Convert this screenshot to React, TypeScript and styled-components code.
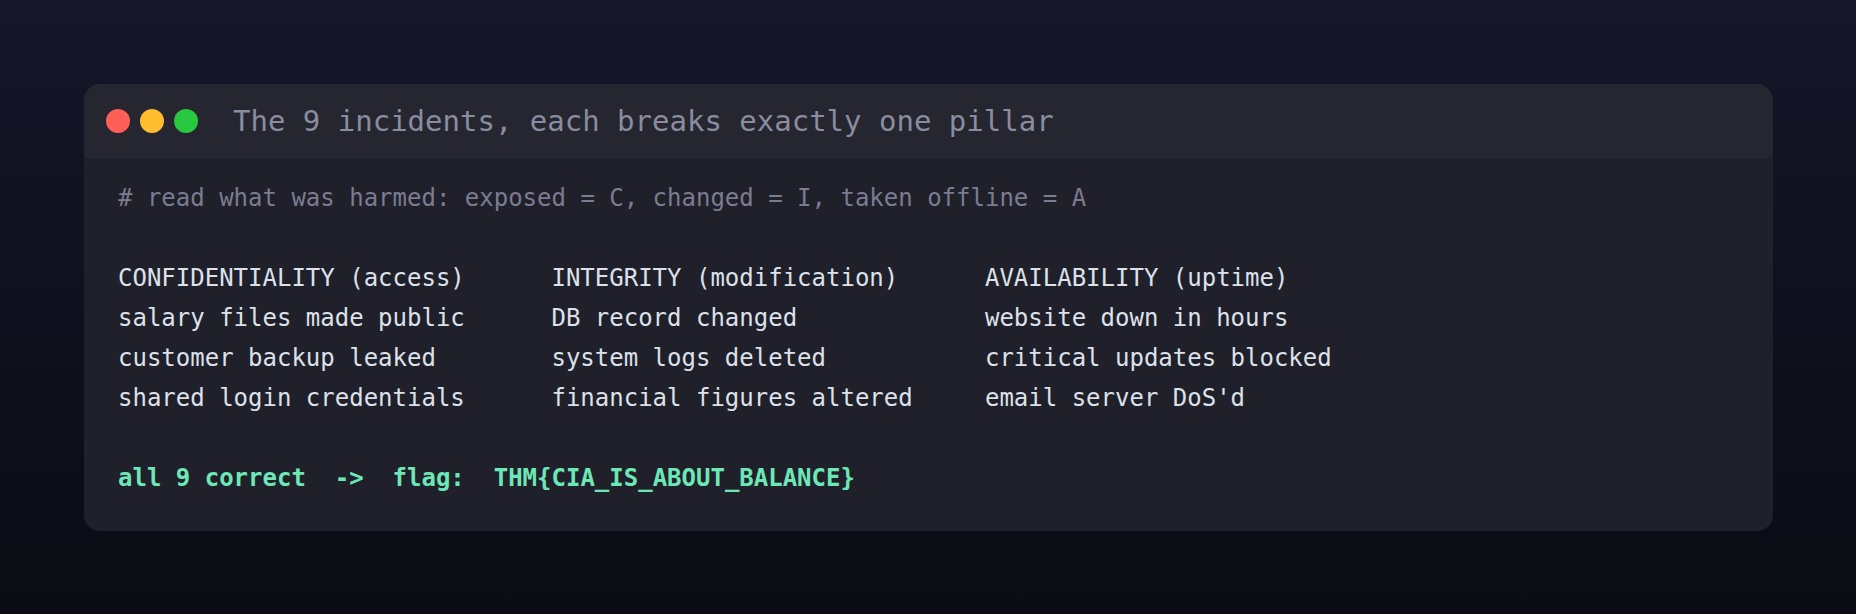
import React from "react";
import styled, { createGlobalStyle } from "styled-components";

const GlobalStyle = createGlobalStyle`
  html, body {
    margin: 0;
    padding: 0;
  }
  body {
    background: linear-gradient(180deg, #151629 0%, #0b0b13 100%);
    min-height: 614px;
  }
`;

const Page = styled.div`
  box-sizing: border-box;
  width: 100%;
  min-height: 614px;
  padding: 84px 83px 83px 84px;
  display: flex;
  flex-direction: column;
`;

const Window = styled.section`
  background: #20202b;
  border-radius: 16px;
  overflow: hidden;
  font-family: "DejaVu Sans Mono", "Liberation Mono", monospace;
`;

const TitleBar = styled.header`
  height: 74px;
  background: #252630;
  display: flex;
  align-items: center;
  padding: 0 22px;
`;

const Dots = styled.div`
  display: flex;
  gap: 10px;
`;

const Dot = styled.span<{ $color: string }>`
  width: 24px;
  height: 24px;
  border-radius: 50%;
  background: ${(p) => p.$color};
`;

const Title = styled.h1`
  margin: 0 0 0 35px;
  font-size: 29px;
  font-weight: 400;
  color: #8b8c9f;
  letter-spacing: 0;
`;

const Body = styled.div`
  padding: 20px 34px 33px 34px;
  font-size: 24px;
  line-height: 40px;
  color: #dde1ea;
  white-space: pre;
`;

const Comment = styled.div`
  color: #7b7c90;
`;

const Blank = styled.div`
  height: 40px;
`;

const Table = styled.div`
  display: grid;
  grid-template-columns: repeat(3, 30ch);
  grid-auto-rows: 40px;
`;

const Cell = styled.div``;

const Flag = styled.div`
  color: #6ee7b7;
  font-weight: 700;
`;

const columns = [
  ["CONFIDENTIALITY (access)", "INTEGRITY (modification)", "AVAILABILITY (uptime)"],
  ["salary files made public", "DB record changed", "website down in hours"],
  ["customer backup leaked", "system logs deleted", "critical updates blocked"],
  ["shared login credentials", "financial figures altered", "email server DoS'd"],
];

export default function App() {
  return (
    <>
      <GlobalStyle />
      <Page>
        <Window>
          <TitleBar>
            <Dots>
              <Dot $color="#ff5f57" />
              <Dot $color="#febc2e" />
              <Dot $color="#28c840" />
            </Dots>
            <Title>The 9 incidents, each breaks exactly one pillar</Title>
          </TitleBar>
          <Body>
            <Comment># read what was harmed: exposed = C, changed = I, taken offline = A</Comment>
            <Blank />
            <Table>
              {columns.flat().map((t, i) => (
                <Cell key={i}>{t}</Cell>
              ))}
            </Table>
            <Blank />
            <Flag>all 9 correct  -&gt;  flag:  THM{"{"}CIA_IS_ABOUT_BALANCE{"}"}</Flag>
          </Body>
        </Window>
      </Page>
    </>
  );
}
